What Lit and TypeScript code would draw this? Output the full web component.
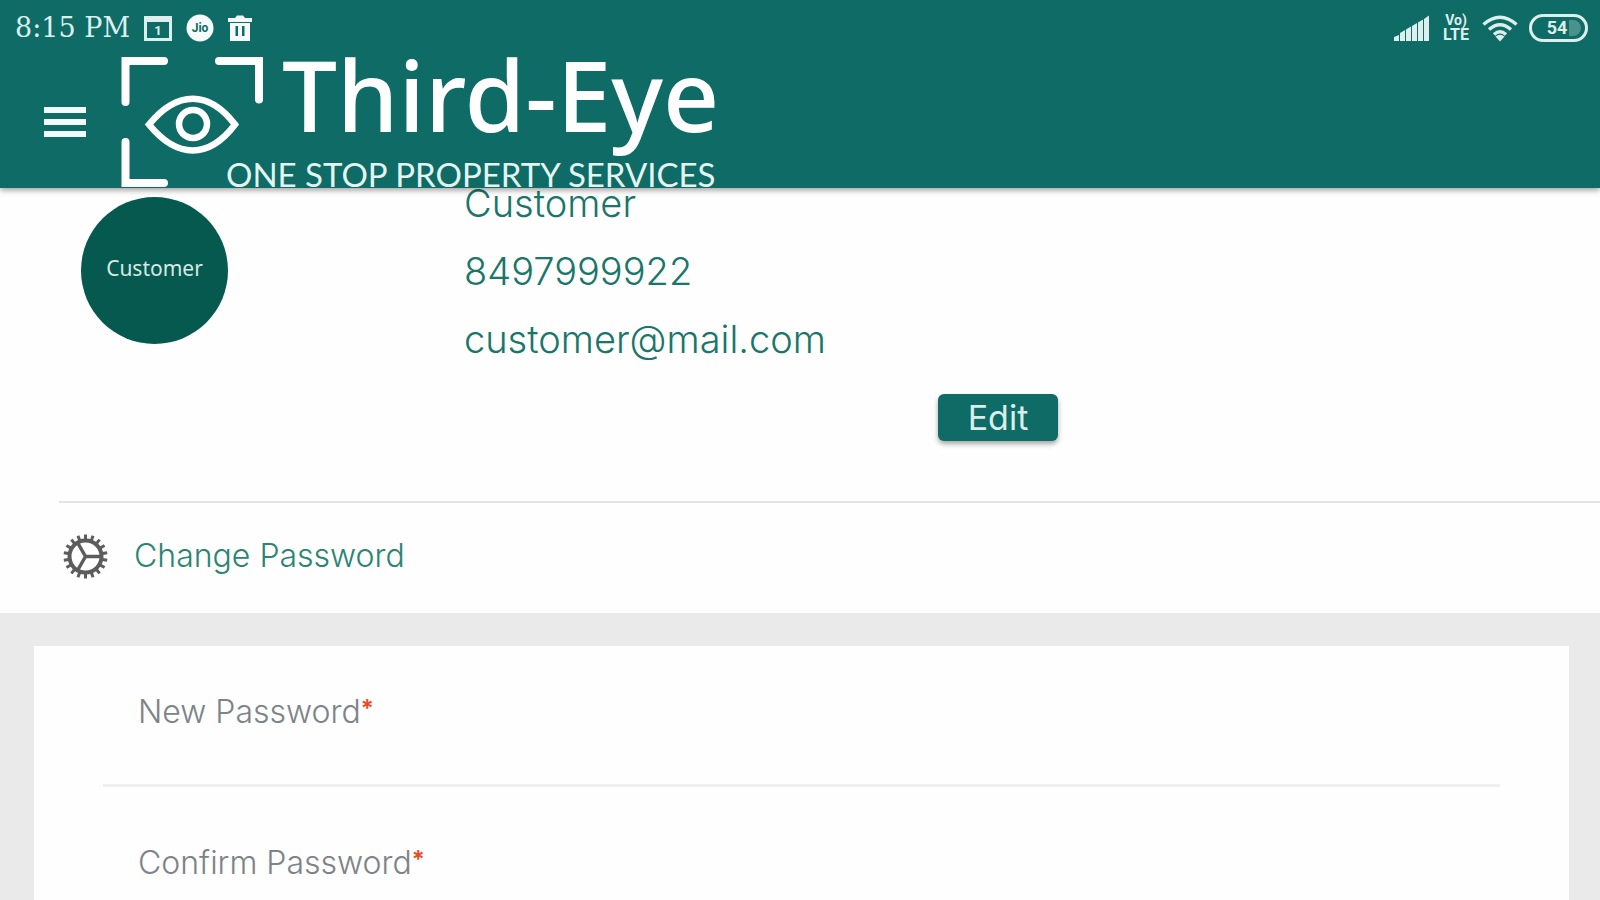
import { LitElement, html, css, svg } from "lit";
import { customElement } from "lit/decorators.js";

const TEETH = Array.from({ length: 18 }, (_, i) => i * 20);

@customElement("status-bar")
class StatusBar extends LitElement {
  static styles = css`
    :host {
      display: flex;
      justify-content: space-between;
      align-items: center;
      height: 54px;
      padding: 2px 12px 0 15px;
      box-sizing: border-box;
      color: #dcefed;
    }
    .group { display: flex; align-items: center; gap: 14px; }
    .right { gap: 11px; }
    .time { font: 27px/50px "DejaVu Serif", serif; }
    svg { display: block; fill: currentColor; }
    .bright { color: #f4fbfa; }
    .label { font-family: Roboto, sans-serif; font-weight: 700; }
    .dark { fill: #0e6b65; }
  `;
  render() {
    return html`
      <div class="group">
        <span class="time">8:15 PM</span>
        <svg width="28" height="27" viewBox="0 0 28 27" aria-hidden="true">
          <path fill-rule="evenodd" d="M0 1h28v25H0zM3 7v16h22V7z" />
          <text class="label" x="14" y="20" font-size="13" text-anchor="middle">1</text>
        </svg>
        <svg class="bright" width="28" height="28" viewBox="0 0 28 28" aria-hidden="true">
          <circle cx="14" cy="14" r="13.5" />
          <text class="label dark" x="14" y="18" font-size="12" text-anchor="middle">Jio</text>
        </svg>
        <svg class="bright" width="24" height="27" viewBox="0 0 24 27" aria-hidden="true">
          <path fill-rule="evenodd" d="M0 3h7l2-2.500h6l2 2.500h7v4H0zM2 8h20v18H2zM7.500 11v10h2.500V11zM14 11v10h2.500V11z" />
        </svg>
      </div>
      <div class="group right">
        <svg width="36" height="27" viewBox="0 0 36 27" aria-hidden="true">
          <path d="M0 26v-4l5-2V26zM6 26v-8l5-3V26zM12 26V14.500l5-3V26zM18 26V11l5-3V26zM24 26V7.500l5-3V26zM30 26V4l5-3.500V26z" />
        </svg>
        <svg width="30" height="30" viewBox="0 0 30 30" aria-hidden="true">
          <text class="label" x="15" y="12" font-size="14" text-anchor="middle">Vo)</text>
          <text class="label" x="15" y="27" font-size="16" text-anchor="middle">LTE</text>
        </svg>
        <svg width="36" height="27" viewBox="0 0 36 27" aria-hidden="true">
          <g fill="none" stroke="currentColor" stroke-width="3.400">
            <path d="M1.500 9.500Q18-5 34.500 9.500" />
            <path d="M7 14.500Q18 5 29 14.500" />
            <path d="M12 19.500Q18 14 24 19.500" />
          </g>
          <path d="M13.500 21.500Q18 18 22.500 21.500L18 26.500z" />
        </svg>
        <svg width="59" height="28" viewBox="0 0 59 28" aria-hidden="true">
          <rect x="1.500" y="1.500" width="56" height="25" rx="12.500" fill="none" stroke="currentColor" stroke-width="3" />
          <path d="M40 6h4a8 8 0 0 1 0 16h-4z" opacity=".3" />
          <text class="label" x="28" y="20" font-size="18" text-anchor="middle">54</text>
        </svg>
      </div>
    `;
  }
}

@customElement("brand-logo")
class BrandLogo extends LitElement {
  static styles = css`
    :host {
      display: grid;
      grid-template-columns: 106px 56px auto;
      grid-template-rows: 102px 32px;
      color: #fff;
    }
    .mark { grid-area: 1 / 1 / 3 / 3; display: block; }
    .name {
      grid-area: 1 / 3;
      margin: 0;
      font: 500 98px/80px "Noto Sans", sans-serif;
    }
    .tag {
      grid-area: 2 / 2 / 3 / 4;
      margin: 0;
      font: 33px/36px Lato, sans-serif;
      white-space: nowrap;
      color: #e4f4f2;
    }
  `;
  render() {
    return html`
      <svg class="mark" width="146" height="134" viewBox="120 54 146 134" fill="none" stroke="currentColor"
        stroke-width="8" stroke-linecap="round" aria-hidden="true">
        <path d="M164 61H125.500V102M219 61H259V99.500M125.500 142V183H164" />
        <path stroke-width="6.500" stroke-linejoin="miter" d="M149 124.500C177 90 209 90 235 124.500C209 159 177 159 149 124.500z" />
        <circle cx="193" cy="124" r="14" stroke-width="6.500" />
      </svg>
      <h1 class="name">Third-Eye</h1>
      <p class="tag">ONE STOP PROPERTY SERVICES</p>
    `;
  }
}

@customElement("app-root")
class AppRoot extends LitElement {
  static styles = css`
    :host {
      display: flex;
      flex-direction: column;
      height: 100vh;
      background: #fefefe;
      font-family: Inter, "Noto Sans", sans-serif;
      color: #19766a;
    }
    * { box-sizing: border-box; }
    .top {
      position: relative;
      z-index: 1;
      background: #0e6b65;
      box-shadow: 0 2px 6px rgba(0, 0, 0, 0.4);
    }
    .bar { display: flex; padding-left: 44px; gap: 34px; }
    .menu {
      display: grid;
      gap: 6px;
      align-self: center;
      width: 42px;
      padding: 2px 0 0;
      border: 0;
      background: none;
      cursor: pointer;
    }
    .menu span { height: 6px; background: #f2fbfa; }
    .page {
      flex: 1;
      min-height: 0;
      display: flex;
      flex-direction: column;
      overflow-y: auto;
      scrollbar-width: none;
    }
    .profile {
      display: grid;
      grid-template-columns: 383px 1fr;
      padding-left: 81px;
    }
    .avatar {
      display: grid;
      place-items: center;
      width: 147px;
      height: 147px;
      margin-top: 9px;
      padding-bottom: 6px;
      border-radius: 50%;
      background: #06594f;
      color: #d5e9e5;
      font: 21px/30px "Noto Sans", sans-serif;
    }
    .details {
      display: grid;
      gap: 38px;
      margin: 0;
      padding: 0;
      list-style: none;
      font-size: 38px;
      line-height: 30px;
      font-weight: 300;
    }
    .actions { padding: 40px 0 60px 59%; margin-left: -6px; }
    .edit {
      width: 120px;
      height: 47px;
      padding: 0;
      border: 0;
      border-radius: 6px;
      background: #0e6b65;
      box-shadow: 0 3px 5px rgba(0, 0, 0, 0.35);
      color: #d9edea;
      font: 34px/44px Inter, sans-serif;
      cursor: pointer;
    }
    .section {
      display: flex;
      align-items: center;
      gap: 26px;
      margin-left: 59px;
      padding: 0 0 4px 4px;
      height: 112px;
      flex-shrink: 0;
      border-top: 2px solid #e4e4e4;
    }
    .section h2 { margin: 0; font-size: 32px; line-height: 36px; font-weight: 300; color: #2a8573; }
    .gear { display: block; stroke: #5c5c5c; fill: none; }
    .panel {
      flex: 1 0 auto;
      padding: 33px 31px 0 34px;
      background: #eaeaea;
    }
    .card { padding: 0 69px; background: #fefefe; }
    .field { display: grid; height: 141px; border-bottom: 3px solid #efefef; }
    .field + .field { height: 151px; }
    .field label, .field input { grid-area: 1 / 1; }
    .field label {
      align-self: end;
      padding: 0 35px;
      margin-bottom: 54px;
      font-size: 32px;
      line-height: 36px;
      font-weight: 300;
      color: #7d8388;
      pointer-events: none;
    }
    .field input {
      width: 100%;
      border: 0;
      outline: 0;
      padding: 0 35px;
      background: none;
      font: 32px/36px Inter, sans-serif;
    }
    .required { color: #ee4b1e; font-size: 24px; line-height: 24px; font-weight: 600; vertical-align: 6px; }
  `;

  field(id: string, label: string) {
    return html`
      <div class="field">
        <input id=${id} type="password" required />
        <label for=${id}>${label}<span class="required">*</span></label>
      </div>
    `;
  }

  render() {
    return html`
      <header class="top">
        <status-bar></status-bar>
        <div class="bar">
          <button class="menu" aria-label="Menu"><span></span><span></span><span></span></button>
          <brand-logo></brand-logo>
        </div>
      </header>
      <main class="page">
        <section class="profile">
          <div class="avatar">Customer</div>
          <ul class="details">
            <li>Customer</li>
            <li>8497999922</li>
            <li>customer@mail.com</li>
          </ul>
        </section>
        <div class="actions"><button class="edit">Edit</button></div>
        <div class="section">
          <svg class="gear" width="45" height="45" viewBox="-22.500 -22.500 45 45" aria-hidden="true">
            <circle r="16" stroke-width="4" />
            <path stroke-width="3.500" d="M0 0H16M0 0L-8 -14M0 0L-8 14" />
            ${TEETH.map((a) => svg`<path stroke-width="3" d="M17 0H22" transform="rotate(${a + 10})" />`)}
          </svg>
          <h2>Change Password</h2>
        </div>
        <section class="panel">
          <form class="card">
            ${this.field("new-password", "New Password")}
            ${this.field("confirm-password", "Confirm Password")}
          </form>
        </section>
      </main>
    `;
  }
}
